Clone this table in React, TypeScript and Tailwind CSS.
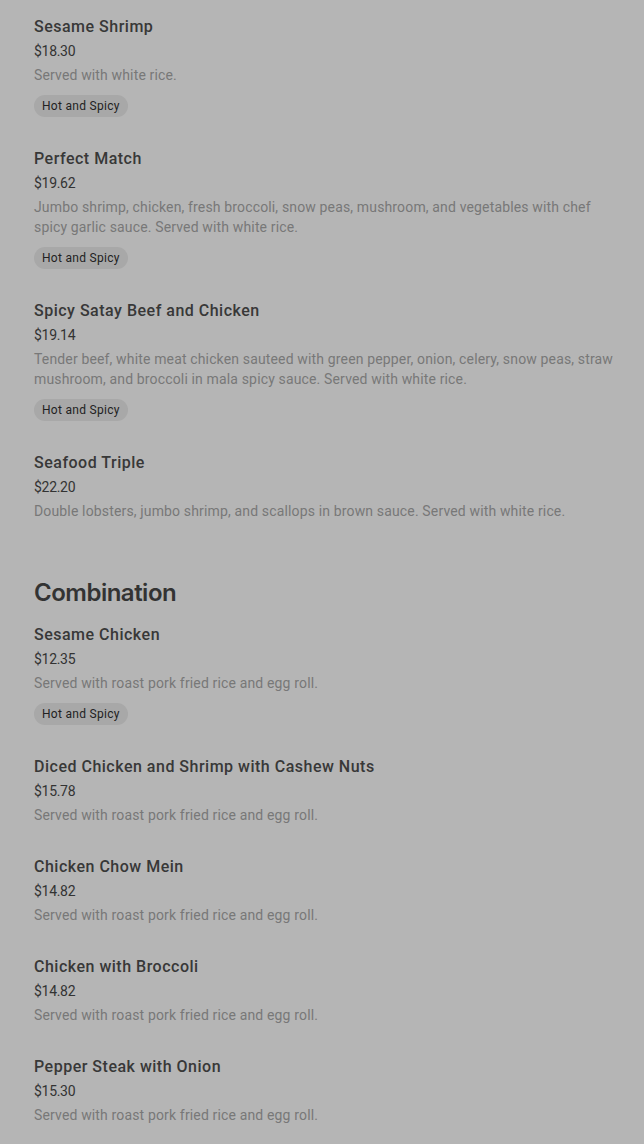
type Item = {
  name: string;
  price: string;
  desc: string;
  spicy?: boolean;
};

const seafood: Item[] = [
  { name: 'Sesame Shrimp', price: '$18.30', desc: 'Served with white rice.', spicy: true },
  {
    name: 'Perfect Match',
    price: '$19.62',
    desc: 'Jumbo shrimp, chicken, fresh broccoli, snow peas, mushroom, and vegetables with chef spicy garlic sauce. Served with white rice.',
    spicy: true,
  },
  {
    name: 'Spicy Satay Beef and Chicken',
    price: '$19.14',
    desc: 'Tender beef, white meat chicken sauteed with green pepper, onion, celery, snow peas, straw mushroom, and broccoli in mala spicy sauce. Served with white rice.',
    spicy: true,
  },
  {
    name: 'Seafood Triple',
    price: '$22.20',
    desc: 'Double lobsters, jumbo shrimp, and scallops in brown sauce. Served with white rice.',
  },
];

const combos: Item[] = [
  { name: 'Sesame Chicken', price: '$12.35', desc: 'Served with roast pork fried rice and egg roll.', spicy: true },
  { name: 'Diced Chicken and Shrimp with Cashew Nuts', price: '$15.78', desc: 'Served with roast pork fried rice and egg roll.' },
  { name: 'Chicken Chow Mein', price: '$14.82', desc: 'Served with roast pork fried rice and egg roll.' },
  { name: 'Chicken with Broccoli', price: '$14.82', desc: 'Served with roast pork fried rice and egg roll.' },
  { name: 'Pepper Steak with Onion', price: '$15.30', desc: 'Served with roast pork fried rice and egg roll.' },
];

function MenuItem({ item }: { item: Item }) {
  return (
    <div className="pt-[14px] pb-4">
      <h3 className="text-[16px] leading-6 font-medium text-[#383838] tracking-[0.5px]">{item.name}</h3>
      <p className="mt-[2px] text-[14px] leading-5 text-[#333333] tracking-[-0.3px]">{item.price}</p>
      <p className="mt-1 text-[14px] leading-5 text-[#787878] tracking-[0.15px]">{item.desc}</p>
      {item.spicy && (
        <span className="mt-[10px] inline-flex h-[22px] items-center rounded-full bg-[#a8a8a8] px-2 text-[12px] text-[#222222] tracking-[0.3px]">
          Hot and Spicy
        </span>
      )}
    </div>
  );
}

export default function App() {
  return (
    <div
      className="min-h-screen bg-[#b5b5b5] pt-px pl-[34px] pr-5"
      style={{ fontFamily: 'Roboto, "Liberation Sans", sans-serif' }}
    >
      <div>
        {seafood.map((item) => (
          <MenuItem key={item.name} item={item} />
        ))}
      </div>
      <section className="mt-10">
        <h2
          className="text-[24px] leading-8 font-semibold text-[#333333] tracking-[-0.5px]"
          style={{ fontFamily: 'Inter, sans-serif' }}
        >
          Combination
        </h2>
        {combos.map((item) => (
          <MenuItem key={item.name} item={item} />
        ))}
      </section>
    </div>
  );
}
